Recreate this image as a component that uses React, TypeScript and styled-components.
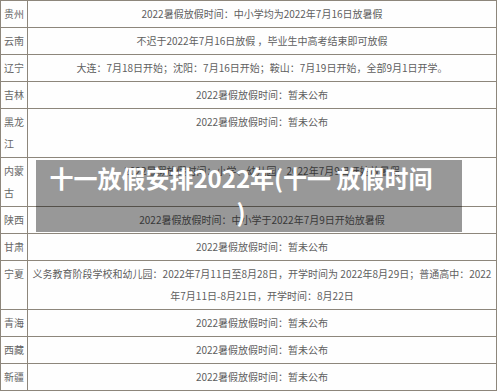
import React from 'react'
import styled, { createGlobalStyle } from 'styled-components'

const GlobalStyle = createGlobalStyle`
  body {
    margin: 0;
    background: #fff;
    font-family: 'Noto Sans CJK SC', 'Noto Sans', sans-serif;
  }
`

const Page = styled.div`
  position: relative;
  width: 500px;
  height: 392px;
  overflow: hidden;
  background: #fefefe;
`

const Table = styled.table`
  width: 497px;
  border-collapse: collapse;
  table-layout: fixed;
  border: 1px solid #8d867b;
  font-size: 10px;
  line-height: 22px;
  color: #5e5e5e;
`

const RegionCell = styled.td`
  width: 20px;
  padding: 2px 3px;
  border: 1px solid #8d867b;
  vertical-align: top;
  word-break: break-all;
  color: #666;
`

const InfoCell = styled.td`
  padding: 2px 4px;
  border: 1px solid #8d867b;
  text-align: center;
  vertical-align: top;
`

// caption strip laid over the picture
const Caption = styled.div`
  position: absolute;
  left: 36px;
  top: 160px;
  width: 426px;
  height: 72px;
  box-sizing: border-box;
  padding: 1px 24px 0 8px;
  background: rgba(0, 0, 0, 0.4);
  color: #fff;
  font-size: 24px;
  font-weight: 700;
  line-height: 34px;
  text-align: center;
  white-space: nowrap;
`

interface Row {
  region: string
  info: string
}

const rows: Row[] = [
  { region: '贵州', info: '2022暑假放假时间：中小学均为2022年7月16日放暑假' },
  { region: '云南', info: '不迟于2022年7月16日放假 ，毕业生中高考结束即可放假' },
  { region: '辽宁', info: '大连：7月18日开始；沈阳：7月16日开始；鞍山：7月19日开始，全部9月1日开学。' },
  { region: '吉林', info: '2022暑假放假时间：暂未公布' },
  { region: '黑龙江', info: '2022暑假放假时间：暂未公布' },
  { region: '内蒙古', info: '2022暑假放假时间：小学、幼儿园：2022年7月9日开始放暑假' },
  { region: '陕西', info: '2022暑假放假时间：中小学于2022年7月9日开始放暑假' },
  { region: '甘肃', info: '2022暑假放假时间：暂未公布' },
  {
    region: '宁夏',
    info: '义务教育阶段学校和幼儿园：2022年7月11日至8月28日，开学时间为 2022年8月29日；普通高中：2022年7月11日-8月21日，开学时间：8月22日',
  },
  { region: '青海', info: '2022暑假放假时间：暂未公布' },
  { region: '西藏', info: '2022暑假放假时间：暂未公布' },
  { region: '新疆', info: '2022暑假放假时间：暂未公布' },
]

const App: React.FC = () => {
  return <>
    <GlobalStyle/>
    <Page>
      <Table>
        <tbody>
          {rows.map(row => (
            <tr key={row.region}>
              <RegionCell>{row.region}</RegionCell>
              <InfoCell>{row.info}</InfoCell>
            </tr>
          ))}
        </tbody>
      </Table>
      <Caption>
        十一放假安排2022年(十一 放假时间<br/>)
      </Caption>
    </Page>
  </>
}

export default App
